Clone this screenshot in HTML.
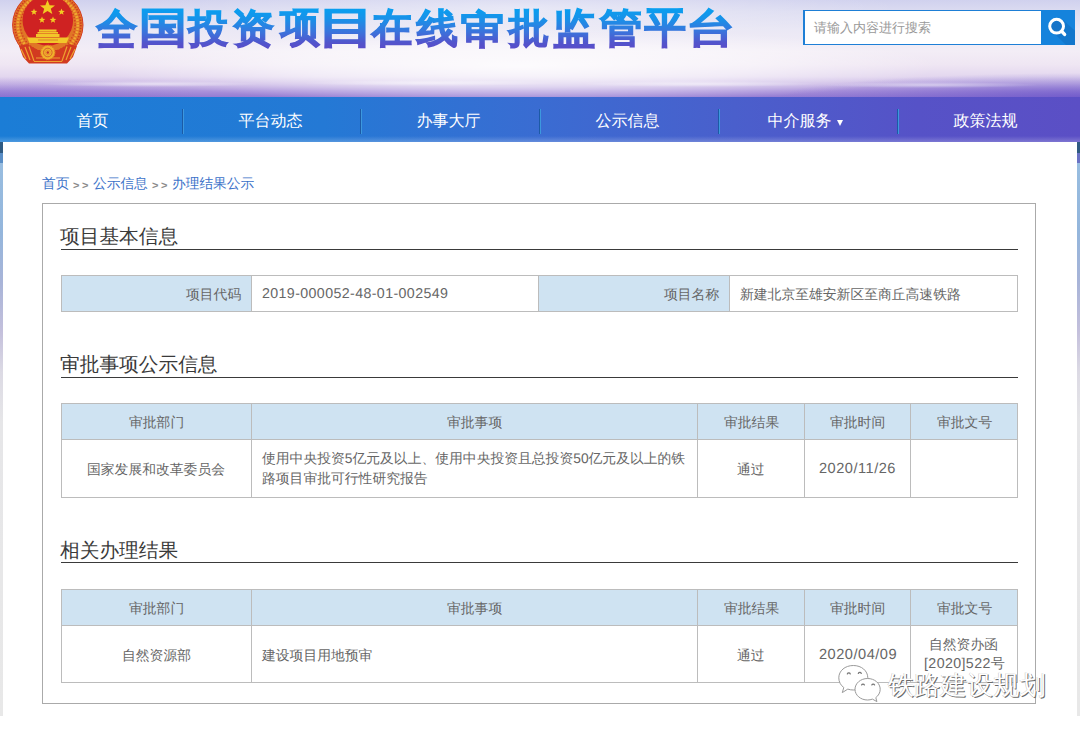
<!DOCTYPE html>
<html><head><meta charset="utf-8">
<style>
*{margin:0;padding:0;box-sizing:border-box}
html,body{width:1080px;height:732px;overflow:hidden;background:#fff;font-family:"Liberation Sans",sans-serif;text-rendering:geometricPrecision;}
.a{position:absolute;white-space:nowrap}
#hdr{position:absolute;left:0;top:0;width:1080px;height:98px;
 background:radial-gradient(ellipse 110px 3px at 150px 84px,rgba(255,255,255,0.55),rgba(255,255,255,0)),radial-gradient(ellipse 130px 3px at 430px 83px,rgba(255,255,255,0.5),rgba(255,255,255,0)),radial-gradient(ellipse 120px 3px at 700px 84px,rgba(255,255,255,0.5),rgba(255,255,255,0)),radial-gradient(ellipse 110px 3px at 930px 85px,rgba(255,255,255,0.45),rgba(255,255,255,0)),radial-gradient(ellipse 300px 24px at 1080px 97px,rgba(100,80,200,0.7),rgba(100,80,200,0)),radial-gradient(ellipse 200px 20px at 0px 97px,rgba(120,95,205,0.35),rgba(120,95,205,0)),radial-gradient(ellipse 420px 38px at 520px 66px,rgba(255,255,255,0.85),rgba(255,255,255,0.5) 55%,rgba(255,255,255,0) 100%),
 radial-gradient(ellipse 380px 30px at 520px 8px,rgba(255,255,255,0.4),rgba(255,255,255,0)),
 linear-gradient(180deg,#d0d1ee 0%,#dcdcf1 12%,#eae8f5 30%,#f3edf6 52%,#efe6f3 66%,#e3d7ef 78%,#cbb9e6 86%,#aa92da 93%,#9178d2 100%);}
#emb{position:absolute;left:12px;top:0;width:72px;height:66px}
#title{position:absolute;left:0;top:0;width:760px;height:60px}
.tc{position:absolute;font-size:45.3px;font-weight:900;line-height:62px;padding:0 6px;-webkit-text-stroke:1.2px transparent;-webkit-background-clip:text;background-clip:text;color:transparent;transform-origin:0 0;white-space:nowrap}
#search{position:absolute;left:803px;top:10px;width:239px;height:35px;border:1px solid #1e7fd6;border-left-width:2px;background:#fff;}
#search span{position:absolute;left:9px;top:0;font-size:13px;color:#999;line-height:33px}
#sbtn{position:absolute;left:1041px;top:10px;width:34px;height:35px;background:#1583dc;overflow:hidden}
#nav{position:absolute;left:0;top:97px;width:1080px;height:45px;background:linear-gradient(90deg,#1b7dd6 0%,#2479d5 30%,#3a6cd2 50%,#4a5fcc 68%,#5652c7 85%,#5b4fc5 100%)}
#nav:after{content:"";position:absolute;left:0;right:0;bottom:0;height:6px;background:linear-gradient(180deg,rgba(255,255,255,0),rgba(255,255,255,0.22))}
#nav .t{position:absolute;top:1.5px;height:45px;line-height:45px;color:#fff;font-size:16px;text-align:center;width:179px}
#nav i{position:absolute;top:12px;width:2px;height:25px;border-left:1px solid #1c5aa6;background:#3d98de}
#lstrip{position:absolute;left:0;top:142px;width:3px;height:574px;background:linear-gradient(180deg,#2f5a82 0px,#2f5a82 11px,#5a8ec6 11px,#5a8ec6 21px,#98bde0 21px,#94b6dc 90px,#a8b4d8 140px,#c4c0dc 190px,#dcdae4 230px,#e6e6e8 280px,#e8e8e8 574px)}
#rstrip{position:absolute;left:1077px;top:142px;width:3px;height:574px;background:linear-gradient(180deg,#2f5a82 0px,#2f5a82 11px,#6a72c4 11px,#6a72c4 21px,#98bde0 21px,#94b6dc 90px,#a8b4d8 140px,#c4c0dc 190px,#dcdae4 230px,#e6e6e8 280px,#e8e8e8 574px)}
.cr{position:absolute;top:176px;font-size:13.7px;color:#3b72c9;line-height:16px;white-space:nowrap}
.gt{position:absolute;top:177.5px;font-size:11px;font-weight:bold;color:#8c8c8c;line-height:16px}
#box{position:absolute;left:42px;top:203px;width:994px;height:501px;border:1px solid #aaa}
.sec{position:absolute;left:61px;width:957px;height:1px;background:#3a3a3a}
.st{position:absolute;left:60px;font-size:19.7px;color:#3a3a3a;line-height:24px;white-space:nowrap}
.ln{position:absolute;background:#bcbcbc}
.bg{position:absolute;background:#cfe3f2}
.tx{position:absolute;font-size:13.8px;color:#666;line-height:18px;white-space:nowrap}
.num{font-size:14.2px;letter-spacing:0.4px}
.dt{font-size:14.6px;letter-spacing:0.5px}
#wm{position:absolute;left:836px;top:662px;width:215px;height:42px}
</style></head><body>
<div id="hdr"></div>
<svg id="emb" viewBox="0 0 72 66">
 <defs><clipPath id="ck"><rect x="0" y="0" width="72" height="50"/></clipPath></defs>
 <g clip-path="url(#ck)">
 <ellipse cx="35.8" cy="25" rx="35.2" ry="35" fill="#e07626"/>
 <ellipse cx="35.8" cy="25" rx="33" ry="33" fill="none" stroke="#d03820" stroke-width="1.8" stroke-dasharray="1.4 1.4"/>
 <ellipse cx="35.8" cy="25" rx="30" ry="30" fill="none" stroke="#f0aa30" stroke-width="2.6" stroke-dasharray="1.8 1.4"/>
 <ellipse cx="35.8" cy="25" rx="27.3" ry="27.3" fill="none" stroke="#d03a1e" stroke-width="1.4" stroke-dasharray="1.2 2"/>
 <ellipse cx="35.8" cy="25" rx="35.2" ry="35" fill="none" stroke="#d43a22" stroke-width="1"/>
 </g>
 <path d="M7 46 L11 57 L17 63.5 L55 63.5 L61 57 L65 46 L57 44 L46 50 L26 50 L15 44Z" fill="#d23a20"/>
 <path d="M9 49 L14 59 M13 47 L18 60 M17 46.5 L22 61 M63 49 L58 59 M59 47 L54 60 M55 46.5 L50 61 M24 58 L48 58 M22 61.5 L50 61.5" stroke="#eea030" stroke-width="1.2"/>
 <circle cx="35.8" cy="20.5" r="25.3" fill="#cf2222"/>
 <polygon points="35.5,0 37.6,5.2 43,5.5 38.8,8.8 40.3,14 35.5,11 30.7,14 32.2,8.8 28,5.5 33.4,5.2" fill="#f2cc22"/>
 <polygon points="22,8.5 22.9,10.8 25.3,10.9 23.4,12.4 24.1,14.7 22,13.4 19.9,14.7 20.6,12.4 18.7,10.9 21.1,10.8" fill="#f2cc22"/>
 <polygon points="49.5,8.5 50.4,10.8 52.8,10.9 50.9,12.4 51.6,14.7 49.5,13.4 47.4,14.7 48.1,12.4 46.2,10.9 48.6,10.8" fill="#f2cc22"/>
 <polygon points="30,16.5 30.9,18.8 33.3,18.9 31.4,20.4 32.1,22.7 30,21.4 27.9,22.7 28.6,20.4 26.7,18.9 29.1,18.8" fill="#f2cc22"/>
 <polygon points="41,16.5 41.9,18.8 44.3,18.9 42.4,20.4 43.1,22.7 41,21.4 38.9,22.7 39.6,20.4 37.7,18.9 40.1,18.8" fill="#f2cc22"/>
 <rect x="27" y="29.5" width="17.5" height="2.2" fill="#f2c62a"/>
 <rect x="25.5" y="32" width="20.5" height="1.6" fill="#f2c62a"/>
 <rect x="24" y="34" width="23.5" height="3" fill="#f2c62a"/>
 <path d="M15 37.5 L57 37.5 L54.5 43 L17.5 43Z" fill="#f2c62a"/>
 <path d="M26 40 L46 40" stroke="#d8742a" stroke-width="0.8"/>
 <circle cx="35.8" cy="52.5" r="7.2" fill="#f0b22c"/>
 <circle cx="35.8" cy="52.5" r="7.2" fill="none" stroke="#e07a24" stroke-width="1.2" stroke-dasharray="1.2 1.2"/>
 <circle cx="35.8" cy="52.5" r="4.3" fill="none" stroke="#d8602a" stroke-width="1"/>
 <circle cx="35.8" cy="52.5" r="2.4" fill="none" stroke="#e88a2a" stroke-width="0.8"/>
 <circle cx="35.8" cy="52.5" r="1.2" fill="#c83028"/>
</svg>
<div id="title">
<span class="tc" style="left:90.91px;top:1.08px;transform:scale(0.8979,0.9395);background-image:linear-gradient(180deg,#089ff0 8.0px,#1a90e8 20.1px,#3a74dc 32.9px,#5254cc 44.6px,#5a4cc8 51.0px)">全</span>
<span class="tc" style="left:132.68px;top:0.34px;transform:scale(1.0550,0.9182);background-image:linear-gradient(180deg,#089ff0 9.0px,#1a90e8 21.4px,#3a74dc 34.5px,#5254cc 46.5px,#5a4cc8 53.0px)">国</span>
<span class="tc" style="left:183.32px;top:1.57px;transform:scale(0.8792,0.8783);background-image:linear-gradient(180deg,#089ff0 8.0px,#1a90e8 21.0px,#3a74dc 34.6px,#5254cc 47.2px,#5a4cc8 54.0px)">投</span>
<span class="tc" style="left:226.00px;top:1.57px;transform:scale(0.9378,0.8783);background-image:linear-gradient(180deg,#089ff0 8.0px,#1a90e8 21.0px,#3a74dc 34.6px,#5254cc 47.2px,#5a4cc8 54.0px)">资</span>
<span class="tc" style="left:274.76px;top:-0.58px;transform:scale(0.8792,0.9182);background-image:linear-gradient(180deg,#089ff0 10.0px,#1a90e8 22.4px,#3a74dc 35.5px,#5254cc 47.5px,#5a4cc8 54.0px)">项</span>
<span class="tc" style="left:309.93px;top:-0.80px;transform:scale(1.2788,0.9395);background-image:linear-gradient(180deg,#089ff0 10.0px,#1a90e8 22.1px,#3a74dc 34.9px,#5254cc 46.6px,#5a4cc8 53.0px)">目</span>
<span class="tc" style="left:366.13px;top:1.42px;transform:scale(0.8979,0.8978);background-image:linear-gradient(180deg,#089ff0 8.0px,#1a90e8 20.7px,#3a74dc 34.1px,#5254cc 46.3px,#5a4cc8 53.0px)">在</span>
<span class="tc" style="left:410.85px;top:2.45px;transform:scale(0.9174,0.8783);background-image:linear-gradient(180deg,#089ff0 7.0px,#1a90e8 20.0px,#3a74dc 33.6px,#5254cc 46.2px,#5a4cc8 53.0px)">线</span>
<span class="tc" style="left:455.41px;top:3.44px;transform:scale(0.9591,0.8596);background-image:linear-gradient(180deg,#089ff0 6.0px,#1a90e8 19.3px,#3a74dc 33.2px,#5254cc 46.0px,#5a4cc8 53.0px)">审</span>
<span class="tc" style="left:503.29px;top:1.57px;transform:scale(0.8979,0.8783);background-image:linear-gradient(180deg,#089ff0 8.0px,#1a90e8 21.0px,#3a74dc 34.6px,#5254cc 47.2px,#5a4cc8 54.0px)">批</span>
<span class="tc" style="left:546.97px;top:1.25px;transform:scale(0.9378,0.9182);background-image:linear-gradient(180deg,#089ff0 8.0px,#1a90e8 20.4px,#3a74dc 33.5px,#5254cc 45.5px,#5a4cc8 52.0px)">监</span>
<span class="tc" style="left:593.63px;top:1.42px;transform:scale(0.9378,0.8978);background-image:linear-gradient(180deg,#089ff0 8.0px,#1a90e8 20.7px,#3a74dc 34.1px,#5254cc 46.3px,#5a4cc8 53.0px)">管</span>
<span class="tc" style="left:639.45px;top:-0.80px;transform:scale(0.9174,0.9395);background-image:linear-gradient(180deg,#089ff0 10.0px,#1a90e8 22.1px,#3a74dc 34.9px,#5254cc 46.6px,#5a4cc8 53.0px)">平</span>
<span class="tc" style="left:680.02px;top:2.45px;transform:scale(1.0821,0.8783);background-image:linear-gradient(180deg,#089ff0 7.0px,#1a90e8 20.0px,#3a74dc 33.6px,#5254cc 46.2px,#5a4cc8 53.0px)">台</span>
</div>
<div id="search"><span>请输入内容进行搜索</span></div>
<div id="sbtn"><svg width="34" height="35" viewBox="0 0 34 35">
 <path d="M12 22 L30 40 L40 40 L40 26 L22 10Z" fill="#1170c4" opacity="0.7"/>
 <circle cx="15.6" cy="16.2" r="5.5" fill="#1574c8"/>
 <circle cx="15.6" cy="16.2" r="6.9" fill="none" stroke="#fff" stroke-width="3"/>
 <line x1="21" y1="21.6" x2="23.6" y2="24.4" stroke="#fff" stroke-width="3.4" stroke-linecap="round"/>
</svg></div>
<div id="nav">
 <div class="t" style="left:3px">首页</div>
 <div class="t" style="left:181px">平台动态</div>
 <div class="t" style="left:359px">办事大厅</div>
 <div class="t" style="left:538px">公示信息</div>
 <div class="t" style="left:710px">中介服务</div><b style="position:absolute;left:837px;top:22.5px;width:0;height:0;border-left:3.7px solid transparent;border-right:3.7px solid transparent;border-top:6.5px solid #fff"></b>
 <div class="t" style="left:896px">政策法规</div>
 <i style="left:182px"></i><i style="left:360px"></i><i style="left:539px"></i><i style="left:718px"></i><i style="left:897px"></i>
</div>
<div id="lstrip"></div><div id="rstrip"></div>
<div class="cr" style="left:42px">首页</div>
<div class="gt" style="left:73px">&gt;</div><div class="gt" style="left:82px">&gt;</div>
<div class="cr" style="left:93px">公示信息</div>
<div class="gt" style="left:152px">&gt;</div><div class="gt" style="left:161px">&gt;</div>
<div class="cr" style="left:172px">办理结果公示</div>
<div id="box"></div>

<div class="st" style="top:225px">项目基本信息</div><div class="sec" style="top:249px"></div>
<div class="st" style="top:353px">审批事项公示信息</div><div class="sec" style="top:377px"></div>
<div class="st" style="top:539px">相关办理结果</div><div class="sec" style="top:562px"></div>

<!-- table1 -->
<div class="bg" style="left:61px;top:275px;width:190px;height:36px"></div>
<div class="bg" style="left:538px;top:275px;width:191px;height:36px"></div>
<div class="ln" style="left:61px;top:275px;width:957px;height:1px"></div>
<div class="ln" style="left:61px;top:311px;width:957px;height:1px"></div>
<div class="ln" style="left:61px;top:275px;width:1px;height:37px"></div>
<div class="ln" style="left:251px;top:275px;width:1px;height:37px"></div>
<div class="ln" style="left:538px;top:275px;width:1px;height:37px"></div>
<div class="ln" style="left:729px;top:275px;width:1px;height:37px"></div>
<div class="ln" style="left:1017px;top:275px;width:1px;height:37px"></div>
<div class="tx" style="left:186px;top:285.5px">项目代码</div>
<div class="tx num" style="left:262px;top:284.5px">2019-000052-48-01-002549</div>
<div class="tx" style="left:664px;top:285.5px">项目名称</div>
<div class="tx" style="left:740px;top:285.5px">新建北京至雄安新区至商丘高速铁路</div>

<!-- table2 -->
<div class="bg" style="left:61px;top:403px;width:957px;height:36px"></div>
<div class="ln" style="left:61px;top:403px;width:957px;height:1px"></div>
<div class="ln" style="left:61px;top:439px;width:957px;height:1px"></div>
<div class="ln" style="left:61px;top:497px;width:957px;height:1px"></div>
<div class="ln" style="left:61px;top:403px;width:1px;height:95px"></div>
<div class="ln" style="left:251px;top:403px;width:1px;height:95px"></div>
<div class="ln" style="left:697px;top:403px;width:1px;height:95px"></div>
<div class="ln" style="left:804px;top:403px;width:1px;height:95px"></div>
<div class="ln" style="left:910px;top:403px;width:1px;height:95px"></div>
<div class="ln" style="left:1017px;top:403px;width:1px;height:95px"></div>
<div class="tx" style="left:129px;top:413.5px">审批部门</div>
<div class="tx" style="left:447px;top:413.5px">审批事项</div>
<div class="tx" style="left:724px;top:413.5px">审批结果</div>
<div class="tx" style="left:830px;top:413.5px">审批时间</div>
<div class="tx" style="left:937px;top:413.5px">审批文号</div>
<div class="tx" style="left:87px;top:461px">国家发展和改革委员会</div>
<div class="tx" style="left:262px;top:450px">使用中央投资5亿元及以上、使用中央投资且总投资50亿元及以上的铁</div>
<div class="tx" style="left:262px;top:469.5px">路项目审批可行性研究报告</div>
<div class="tx" style="left:737px;top:461px">通过</div>
<div class="tx dt" style="left:819px;top:459.5px">2020/11/26</div>

<!-- table3 -->
<div class="bg" style="left:61px;top:589px;width:957px;height:36px"></div>
<div class="ln" style="left:61px;top:589px;width:957px;height:1px"></div>
<div class="ln" style="left:61px;top:625px;width:957px;height:1px"></div>
<div class="ln" style="left:61px;top:682px;width:957px;height:1px"></div>
<div class="ln" style="left:61px;top:589px;width:1px;height:94px"></div>
<div class="ln" style="left:251px;top:589px;width:1px;height:94px"></div>
<div class="ln" style="left:697px;top:589px;width:1px;height:94px"></div>
<div class="ln" style="left:804px;top:589px;width:1px;height:94px"></div>
<div class="ln" style="left:910px;top:589px;width:1px;height:94px"></div>
<div class="ln" style="left:1017px;top:589px;width:1px;height:94px"></div>
<div class="tx" style="left:129px;top:600px">审批部门</div>
<div class="tx" style="left:447px;top:600px">审批事项</div>
<div class="tx" style="left:724px;top:600px">审批结果</div>
<div class="tx" style="left:830px;top:600px">审批时间</div>
<div class="tx" style="left:937px;top:600px">审批文号</div>
<div class="tx" style="left:122px;top:646.5px">自然资源部</div>
<div class="tx" style="left:262px;top:646.5px">建设项目用地预审</div>
<div class="tx" style="left:737px;top:646.5px">通过</div>
<div class="tx dt" style="left:819px;top:646px">2020/04/09</div>
<div class="tx" style="left:929px;top:635.5px">自然资办函</div>
<div class="tx num" style="left:924px;top:655px">[2020]522号</div>

<svg id="wm" style="position:absolute;left:830px;top:658px;width:60px;height:48px" viewBox="0 0 60 48">
 <g fill="#fff" stroke="#9a9a9a" stroke-width="1">
  <path d="M23.3 7.5 C31.5 7.5 37.8 12.8 37.8 19.8 C37.8 26.8 31.5 32 23.3 32 C21.3 32 19.5 31.7 17.8 31.1 L12.3 34.6 L13.8 29.5 C10.6 27.3 8.8 23.8 8.8 19.8 C8.8 12.8 15.1 7.5 23.3 7.5Z"/>
  <path d="M37.6 20.5 C44.6 20.5 50.2 25.3 50.2 31.3 C50.2 34.6 48.5 37.6 45.8 39.6 L46.9 43.6 L42.4 41.1 C40.9 41.7 39.3 42 37.6 42 C30.6 42 25 37.2 25 31.3 C25 25.3 30.6 20.5 37.6 20.5Z"/>
 </g>
 <g fill="none" stroke="#777" stroke-width="1.2" stroke-linecap="round">
  <path d="M17.3 16 a1.6 1.6 0 0 1 3 0"/><path d="M28.3 15.5 a1.6 1.6 0 0 1 3 0"/>
  <path d="M31.6 27 a1.5 1.5 0 0 1 2.8 0"/><path d="M41.8 27 a1.5 1.5 0 0 1 2.8 0"/>
 </g>
</svg>
<div class="a" style="left:888px;top:668px;font-size:26.3px;line-height:34px;color:#fff;text-shadow:1px 1px 0.5px #6a6a6a,-0.5px -0.5px 0.3px #c0c0c0">铁路建设规划</div>
</body></html>
